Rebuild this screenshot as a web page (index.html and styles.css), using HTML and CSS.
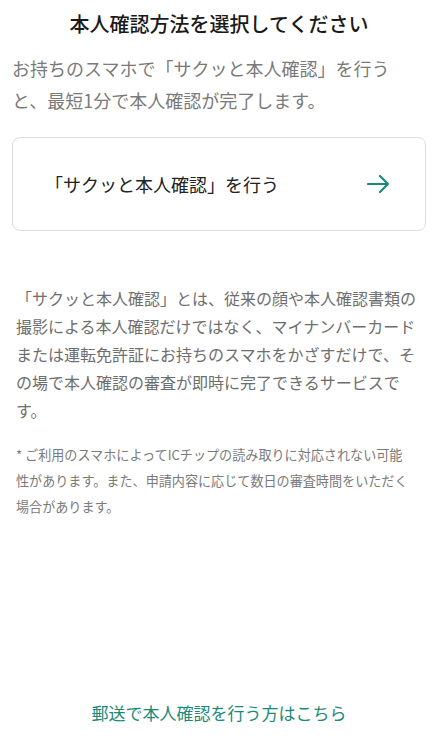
FILE: index.html
```html
<!DOCTYPE html>
<html lang="ja">
<head>
    <meta charset="UTF-8">
    <meta name="viewport" content="width=device-width, initial-scale=1.0">
    <title>本人確認方法を選択</title>
    <link rel="stylesheet" href="styles.css">
</head>
<body>
    <div class="page">
        <h1 class="title">本人確認方法を選択してください</h1>
        <p class="lead">お持ちのスマホで「サクッと本人確認」を行うと、最短1分で本人確認が完了します。</p>

        <a class="option" href="#">
            <span class="option-label">「サクッと本人確認」を行う</span>
            <svg class="option-arrow" width="24" height="20" viewBox="0 0 24 20">
                <path d="M1 10 H21 M13 2 L21 10 L13 18" fill="none" stroke="#1a8a78" stroke-width="2.2" stroke-linecap="round" stroke-linejoin="round"/>
            </svg>
        </a>

        <p class="about">「サクッと本人確認」とは、従来の顔や本人確認書類の撮影による本人確認だけではなく、マイナンバーカードまたは運転免許証にお持ちのスマホをかざすだけで、その場で本人確認の審査が即時に完了できるサービスです。</p>

        <p class="note">* ご利用のスマホによってICチップの読み取りに対応されない可能性があります。また、申請内容に応じて数日の審査時間をいただく場合があります。</p>

        <a class="mail-link" href="#">郵送で本人確認を行う方はこちら</a>
    </div>
</body>
</html>
```

FILE: styles.css
```css
body {
    margin: 0;
    background-color: #fff;
    font-family: "Noto Sans CJK JP", "Noto Sans", sans-serif;
    color: #222;
}
.page {
    display: flex;
    flex-direction: column;
    height: 742px;
    padding: 0 14px 0 12px;
    box-sizing: border-box;
}
.title {
    margin: 0;
    font-size: 20px;
    font-weight: 500;
    line-height: 48px;
    text-align: center;
    color: #1a1a1a;
}
.lead {
    margin: 4px 10px 0 0;
    font-size: 18px;
    line-height: 32px;
    color: #7a7a7a;
}
.option {
    display: flex;
    align-items: center;
    justify-content: space-between;
    height: 94px;
    margin-top: 21px;
    padding: 0 34px 0 32px;
    border: 1px solid #ddd;
    border-radius: 8px;
    box-sizing: border-box;
    text-decoration: none;
    color: #222;
}
.option-label {
    font-size: 18px;
}
.about {
    margin: 53px 2px 0 4px;
    font-size: 16px;
    line-height: 28px;
    color: #6e6e6e;
}
.note {
    margin: 18px 15px 0 4px;
    font-size: 13.1px;
    line-height: 26px;
    color: #7a7a7a;
}
.mail-link {
    margin-top: auto;
    margin-bottom: 14px;
    font-size: 17px;
    line-height: 30px;
    text-align: center;
    text-decoration: none;
    color: #1a8a78;
}
```
